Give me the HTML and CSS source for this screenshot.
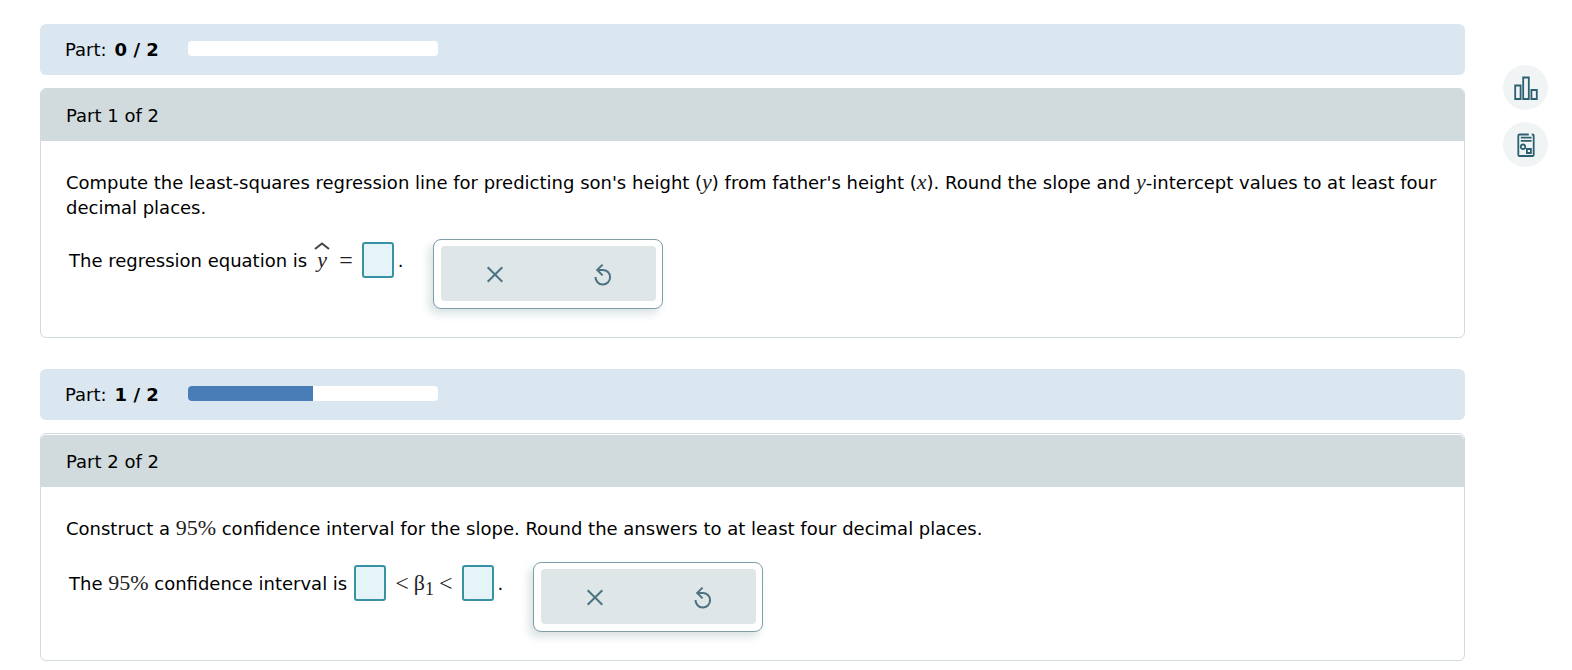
FILE: index.html
```html
<!DOCTYPE html>
<html lang="en">
  <head>
    <meta charset="UTF-8">
    <title>Regression Line</title>
    <link rel="stylesheet" href="styles.css">
  </head>
  <body>

    <svg class="defs" aria-hidden="true">
      <symbol id="icon-clear" viewBox="0 0 24 24">
        <path d="M4.7 5.2L19.3 19.8M19.3 5.2L4.7 19.8"/>
      </symbol>
      <symbol id="icon-reset" viewBox="0 0 24 24">
        <path d="M4.5 15A7.3 7.3 0 1 0 11.8 7.9H6.2M11.6 2.6L6.2 7.9L11.6 13.4"/>
      </symbol>
    </svg>

    <main class="content">

      <section class="part">
        <div class="progress-bar">
          <span class="progress-label">Part: <b>0 / 2</b></span>
          <div class="track"><div class="fill" style="width: 0%"></div></div>
        </div>
        <div class="card">
          <h2 class="card-title">Part 1 of 2</h2>
          <div class="card-body">
            <p class="question">Compute the least-squares regression line for predicting son's height (<i class="math">y</i>) from father's height (<i class="math">x</i>). Round the slope and <i class="math">y</i>-intercept values to at least four decimal places.</p>
            <div class="answer">
              <div class="equation">
                <span>The regression equation is</span>
                <span class="math hat"><svg class="hat-mark" viewBox="0 0 16 8" aria-hidden="true"><path d="M1 7L8 1.5L15 7"/></svg><i>y</i></span>
                <span class="math op equals">=</span>
                <input class="box" type="text" aria-label="Regression equation">
                <span class="stop">.</span>
              </div>
              <div class="tools">
                <div class="tools-inner">
                  <button class="tool" type="button" aria-label="Clear"><svg><use href="#icon-clear"/></svg></button>
                  <button class="tool" type="button" aria-label="Reset"><svg><use href="#icon-reset"/></svg></button>
                </div>
              </div>
            </div>
          </div>
        </div>
      </section>

      <section class="part">
        <div class="progress-bar">
          <span class="progress-label">Part: <b>1 / 2</b></span>
          <div class="track"><div class="fill" style="width: 50%"></div></div>
        </div>
        <div class="card card-open">
          <h2 class="card-title">Part 2 of 2</h2>
          <div class="card-body">
            <p class="question">Construct a <span class="math">95%</span> confidence interval for the slope. Round the answers to at least four decimal places.</p>
            <div class="answer answer-interval">
              <div class="equation">
                <span>The <span class="math">95%</span> confidence interval is</span>
                <input class="box box-first" type="text" aria-label="Lower bound">
                <span class="math bounds"><span class="op">&lt;</span><span class="beta">β<sub>1</sub></span><span class="op">&lt;</span></span>
                <input class="box" type="text" aria-label="Upper bound">
                <span class="stop">.</span>
              </div>
              <div class="tools">
                <div class="tools-inner">
                  <button class="tool" type="button" aria-label="Clear"><svg><use href="#icon-clear"/></svg></button>
                  <button class="tool" type="button" aria-label="Reset"><svg><use href="#icon-reset"/></svg></button>
                </div>
              </div>
            </div>
          </div>
        </div>
      </section>

    </main>

    <aside class="side">
      <button class="side-button" type="button" aria-label="Statistics calculator">
        <svg viewBox="0 0 24 24"><path d="M1.2 9.5H6.6V23H1.2ZM9.2 1.5H14.8V23H9.2ZM17.4 14H22.8V23H17.4Z"/></svg>
      </button>
      <button class="side-button" type="button" aria-label="Formula sheet">
        <svg viewBox="0 0 24 24"><path d="M14.8 1.5H5.5Q4.3 1.5 4.3 2.8V21.7Q4.3 23 5.5 23H18.5Q19.7 23 19.7 21.7V2.8Q19.7 1.5 18.5 1.5H17.8M6.8 4.7H17.6M6.8 7.8H17.6M12.9 16H16.9V20H12.9ZM11.3 13.8A2.3 2.3 0 1 1 6.7 13.8A2.3 2.3 0 1 1 11.3 13.8"/></svg>
      </button>
    </aside>

  </body>
</html>
```
FILE: styles.css
```css
* {
  box-sizing: border-box;
  margin: 0;
  padding: 0;
}

body {
  display: flex;
  gap: 38px;
  padding: 24px 24px 8px 40px;
  background-color: white;
  color: black;
  font-family: Verdana, "DejaVu Sans", sans-serif;
  font-size: 18px;
  line-height: 25px;
}

.defs {
  display: none;
}

.content {
  flex: 1;
  display: flex;
  flex-direction: column;
  gap: 31px;
}

.part {
  display: flex;
  flex-direction: column;
  gap: 13px;
}

.progress-bar {
  display: flex;
  align-items: center;
  gap: 24px;
  padding: 13px 25px;
  background-color: #dae6f0;
  border-radius: 6px;
}

.progress-label {
  display: flex;
  gap: 8px;
  min-width: 99px;
}

.track {
  width: 250px;
  height: 15px;
  margin-bottom: 2px;
  background-color: white;
  border-radius: 4px;
  overflow: hidden;
}

.fill {
  height: 100%;
  background-color: #487db7;
}

.card {
  border: 1px solid #d1dadc;
  border-radius: 6px;
}

.card-open {
  padding-top: 1px;
}

.card-title {
  padding: 14px 25px 13px;
  background-color: #d1dadc;
  border-radius: 5px 5px 0 0;
  font-size: 18px;
  font-weight: normal;
}

.card-body {
  padding: 29px 25px 28px;
}

.math {
  color: #222;
  font-family: "Liberation Serif", "Times New Roman", serif;
  font-size: 22px;
  line-height: 20px;
}

.answer {
  display: flex;
  align-items: flex-start;
  gap: 30px;
  padding: 19px 3px 0;
}

.answer-interval {
  padding-top: 21px;
}

.equation {
  display: flex;
  align-items: center;
  padding-top: 3px;
}

.hat {
  display: flex;
  flex-direction: column;
  align-items: center;
  margin: 0 9px 0 7px;
  padding-bottom: 8px;
}

.hat-mark {
  width: 16px;
  height: 8px;
  fill: none;
  stroke: #444;
  stroke-width: 2;
}

.op {
  font-size: 24px;
}

.equals {
  margin-right: 9px;
}

.box {
  width: 32px;
  height: 36px;
  background-color: #e5f4f8;
  border: 2px solid #3793a4;
  border-radius: 3px;
}

.box-first {
  margin: 0 9px 0 7px;
}

.bounds {
  display: flex;
  align-items: center;
  gap: 5px;
  margin-right: 9px;
}

.beta sub {
  font-size: 18px;
  line-height: 0;
}

.stop {
  padding-left: 4px;
}

.tools {
  width: 230px;
  padding: 6px 6px 7px 7px;
  background-color: white;
  border: 1px solid #7f9ea7;
  border-radius: 8px;
  box-shadow: -4px 5px 8px rgba(70, 110, 120, 0.2);
}

.tools-inner {
  display: flex;
  height: 55px;
  background-color: #dfe6e8;
  border-radius: 4px;
}

.tool {
  flex: 1;
  display: flex;
  align-items: center;
  justify-content: center;
  background: none;
  border: none;
  cursor: pointer;
}

.tool svg {
  width: 24px;
  height: 24px;
  fill: none;
  stroke: #4a7281;
  stroke-width: 2;
}

.side {
  display: flex;
  flex-direction: column;
  gap: 12px;
  padding-top: 41px;
}

.side-button {
  display: flex;
  align-items: center;
  justify-content: center;
  width: 45px;
  height: 45px;
  background-color: #f0f4f5;
  border: none;
  border-radius: 50%;
  cursor: pointer;
}

.side-button svg {
  width: 24px;
  height: 24px;
  fill: none;
  stroke: #2c6070;
  stroke-width: 1.8;
}
```
